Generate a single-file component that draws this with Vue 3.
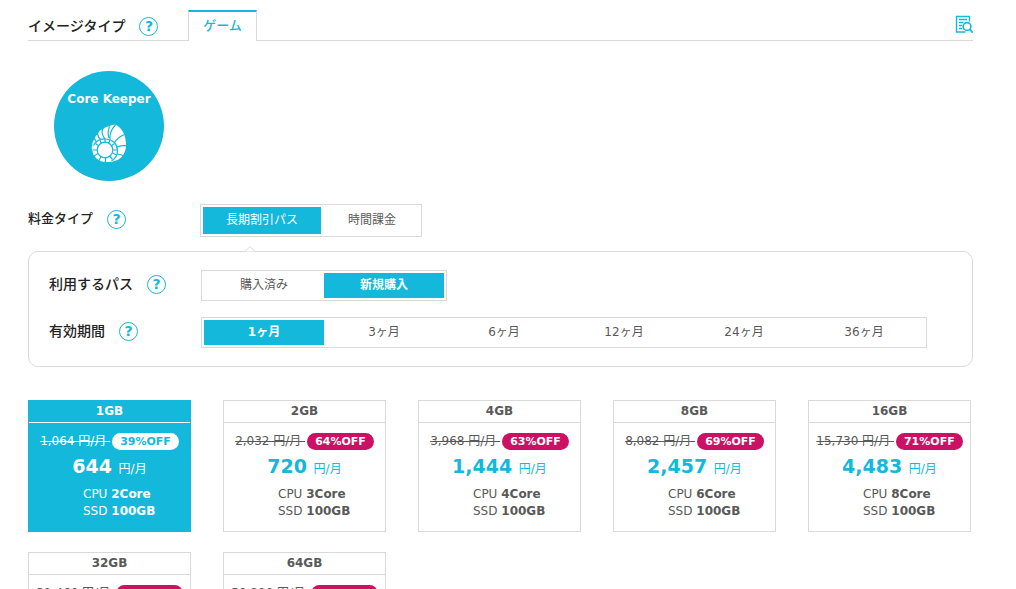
<script setup>
import { ref } from 'vue'

const feeType = ref('pass')
const passKind = ref('new')
const period = ref(1)
const plan = ref('1GB')

const feeTypes = [
  { value: 'pass', label: '長期割引パス' },
  { value: 'hourly', label: '時間課金' },
]
const passKinds = [
  { value: 'owned', label: '購入済み' },
  { value: 'new', label: '新規購入' },
]
const periods = [1, 3, 6, 12, 24, 36]
const plans = [
  { size: '1GB', regular: '1,064', off: 39, price: '644', cores: 2 },
  { size: '2GB', regular: '2,032', off: 64, price: '720', cores: 3 },
  { size: '4GB', regular: '3,968', off: 63, price: '1,444', cores: 4 },
  { size: '8GB', regular: '8,082', off: 69, price: '2,457', cores: 6 },
  { size: '16GB', regular: '15,730', off: 71, price: '4,483', cores: 8 },
  { size: '32GB', regular: '31,460', off: 71, price: '8,966', cores: 12 },
  { size: '64GB', regular: '59,290', off: 71, price: '16,896', cores: 24 },
]
</script>

<template>
  <main class="page">
    <header class="head">
      <div class="title"><h2>イメージタイプ</h2><button class="help" type="button">?</button></div>
      <button class="tab" type="button">ゲーム</button>
      <button class="search" type="button">
        <svg viewBox="0 0 18 19" width="18" height="19" fill="none" stroke="currentColor">
          <path d="M14.500 6.500V1.500H1.500v15.500h9" stroke-width="1.4" />
          <path d="M4 4.500h8M4 7.500h4.500M4 10.500h3M4 13.500h3" stroke-width="1.4" />
          <circle cx="12" cy="11.500" r="3.900" stroke-width="1.6" />
          <path d="M14.800 14.300l3 3.400" stroke-width="1.8" />
        </svg>
      </button>
    </header>

    <button class="image" type="button">
      <span>Core Keeper</span>
      <svg viewBox="0 0 36 40" width="36" height="40">
        <path d="M25 1c-2-.5-5 0-7 1.500-2-.5-5 1-6 3-2.500 0-4.500 2-5 4.500-2 1-3 3-3 5-2 1.500-3 4-2.500 6C.5 23 .5 25 1.500 27 2 33 8 38 15 38c12 1 20-6 20-17C35 11 31 4 25 1z" fill="#fff" />
        <g fill="none" stroke="#14b8da" stroke-width="1.200">
          <circle cx="14" cy="26" r="7.800" />
          <path d="M2.500 21.500C5 17 10 14.500 15 15c7 .5 11.500 5.500 11.500 11.500 0 4.500-2 8-6 10.500" />
          <path d="M19 15.500C18.500 10 20.500 5 24.500 1M23.500 18.500C26 14.500 29.500 12 33.500 10.500M26 23c3-1.300 6-1.500 9-1.300M26 30c2.500 0 4.500.8 6.500 2M14 15c-2.500-3-3.500-6-2.500-10M18 14c-1.500-4-1-8 .5-11.500M10 16c-2-1.800-3-3.800-3.500-6M6 18c-1.500-.8-2-2-2.500-3.500" />
          <path d="M14 15v3.500M19 16l-1.500 3.500M23.500 19.500l-3.500 2.500M26.500 26H22M25.500 31l-4-2M21.500 35.500l-3-3.500M9 16.500l1.500 3M4.500 19.500l3.500 2.500M1.500 26H6M3 32l4-2.500M8 36.500l2-4M14.500 38v-4" />
        </g>
      </svg>
    </button>

    <div class="fee">
      <div class="title"><h3>料金タイプ</h3><button class="help" type="button">?</button></div>
      <div class="seg outer">
        <label v-for="f in feeTypes" :key="f.value" :class="{ on: feeType === f.value }">
          <input v-model="feeType" type="radio" name="fee" :value="f.value" />{{ f.label }}
        </label>
      </div>
    </div>

    <section class="panel">
      <svg class="notch" viewBox="0 0 10 6" width="10" height="6"><path d="M0 5.500L5 .5l5 5" fill="#fff" stroke="#d9d9d9" /></svg>
      <div class="row">
        <div class="title"><h3>利用するパス</h3><button class="help" type="button">?</button></div>
        <div class="seg">
          <label v-for="k in passKinds" :key="k.value" :class="{ on: passKind === k.value, bold: passKind === k.value }">
            <input v-model="passKind" type="radio" name="kind" :value="k.value" />{{ k.label }}
          </label>
        </div>
      </div>
      <div class="row">
        <div class="title"><h3>有効期間</h3><button class="help" type="button">?</button></div>
        <div class="seg">
          <label v-for="m in periods" :key="m" :class="{ on: period === m, bold: period === m }">
            <input v-model="period" type="radio" name="period" :value="m" />{{ m }}ヶ月
          </label>
        </div>
      </div>
    </section>

    <div class="plans">
      <label v-for="p in plans" :key="p.size" class="plan" :class="{ chosen: plan === p.size }">
        <input v-model="plan" type="radio" name="plan" :value="p.size" />
        <strong class="size">{{ p.size }}</strong>
        <span class="regular"><s>{{ p.regular }} 円/月&nbsp;</s><b class="off">{{ p.off }}%OFF</b></span>
        <span class="price"><b>{{ p.price }}&nbsp;</b>円/月</span>
        <span class="spec">CPU <b>{{ p.cores }}Core</b><br />SSD <b>100GB</b></span>
      </label>
    </div>
  </main>
</template>

<style>
body {
  margin: 0;
  background: #fff;
}
</style>

<style scoped>
.page {
  padding: 10px 43px 20px 28px;
  color: #595959;
  font: 12px/17px "DejaVu Sans", "Noto Sans CJK JP", sans-serif;
}
button {
  margin: 0;
  padding: 0;
  border: 0;
  background: none;
  font: inherit;
  color: #14b8da;
  cursor: pointer;
}
input {
  position: absolute;
  opacity: 0;
  margin: 0;
}
h2,
h3 {
  margin: 0;
  color: #222;
  font-size: 14px;
  line-height: 20px;
  font-weight: 500;
  white-space: nowrap;
}
.title {
  display: flex;
  align-items: center;
  gap: 14px;
  padding-bottom: 3px;
}
.help {
  box-sizing: border-box;
  flex: none;
  width: 19px;
  height: 19px;
  border: 1px solid #14b8da;
  border-radius: 50%;
  font-size: 14px;
  line-height: 17px;
  font-weight: 700;
}
.head {
  display: flex;
  height: 30px;
  border-bottom: 1px solid #d9d9d9;
}
.head .title {
  width: 160px;
  padding: 2px 0 0;
}
.tab {
  box-sizing: border-box;
  width: 69px;
  height: 31px;
  padding-bottom: 2px;
  border: 1px solid #d9d9d9;
  border-top: 2px solid #14b8da;
  border-bottom: 0;
  background: #fff;
  font-size: 13px;
  font-weight: 500;
}
.search {
  display: flex;
  align-items: center;
  margin-left: auto;
  padding-bottom: 2px;
}
.image {
  display: flex;
  flex-direction: column;
  align-items: center;
  gap: 16px;
  box-sizing: border-box;
  width: 110px;
  height: 110px;
  margin: 30px 26px 23px;
  padding-top: 20px;
  border-radius: 50%;
  background: #14b8da;
  color: #fff;
  font-weight: 700;
  white-space: nowrap;
}
.fee {
  display: flex;
  align-items: center;
}
.fee .title {
  width: 172px;
}
.fee h3 {
  font-size: 13px;
}
.seg {
  display: flex;
  padding: 2px;
  border: 1px solid #d9d9d9;
}
.seg label {
  width: 120px;
  line-height: 25px;
  text-align: center;
  cursor: pointer;
}
.seg.outer label {
  width: 118px;
  line-height: 27px;
}
.seg.outer label + label {
  width: 94px;
  padding-left: 4px;
}
.seg .on {
  background: #14b8da;
  color: #fff;
}
.bold {
  font-weight: 700;
}
.panel {
  position: relative;
  display: grid;
  gap: 16px;
  margin-top: 14px;
  padding: 18px 20px;
  border: 1px solid #d9d9d9;
  border-radius: 10px;
}
.notch {
  position: absolute;
  top: -6px;
  left: 216px;
}
.row {
  display: flex;
  align-items: center;
}
.row .title {
  width: 152px;
}
.plans {
  display: grid;
  grid-template-columns: repeat(5, 1fr);
  gap: 20px 32px;
  margin-top: 33px;
  padding-right: 2px;
}
.plan {
  display: flex;
  flex-direction: column;
  border: 1px solid #d9d9d9;
  padding-bottom: 11px;
  text-align: center;
  cursor: pointer;
}
.size {
  border-bottom: 1px solid #d9d9d9;
  line-height: 21px;
}
.regular {
  display: flex;
  justify-content: center;
  align-items: center;
  gap: 2px;
  margin-top: 10px;
  white-space: nowrap;
}
.off {
  padding: 0 8px;
  border-radius: 9px;
  background: #cc1164;
  color: #fff;
  font-size: 11px;
}
.price {
  margin-top: 3px;
  line-height: 26px;
  color: #14b8da;
}
.price b {
  font-size: 19px;
}
.spec {
  margin-top: 4px;
  padding-left: 54px;
  text-align: left;
}
.chosen {
  border-color: #14b8da;
  background: #14b8da;
  color: #fff;
}
.chosen .size {
  border-color: #fff;
}
.chosen .price {
  color: #fff;
}
.chosen .off {
  background: #fff;
  color: #14b8da;
}
</style>
